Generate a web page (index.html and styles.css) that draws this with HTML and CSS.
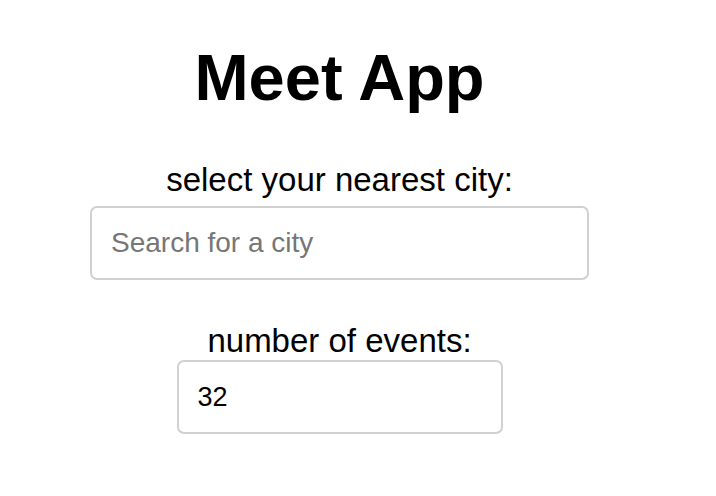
FILE: index.html
```html
<!DOCTYPE html>
<html lang="en">
<head>
<meta charset="utf-8">
<title>Meet App</title>
<link rel="stylesheet" href="styles.css">
</head>
<body>
<div class="app">
  <h1 class="title">Meet App</h1>
  <div class="field field-city">
    <label class="label" for="city">select your nearest city:</label>
    <input class="input input-city" id="city" type="text" placeholder="Search for a city">
  </div>
  <div class="field field-events">
    <label class="label" for="events">number of events:</label>
    <input class="input input-events" id="events" type="text" value="32">
  </div>
</div>
</body>
</html>
```

FILE: styles.css
```css
html, body {
  margin: 0;
  padding: 0;
  background: #ffffff;
}

body {
  font-family: "Liberation Sans", Arial, Helvetica, sans-serif;
  color: #000000;
}

.app {
  width: 679px;
  display: flex;
  flex-direction: column;
  align-items: center;
  padding-top: 41px;
}

.title {
  margin: 0;
  font-size: 65px;
  line-height: 74px;
  font-weight: 700;
}

.field {
  display: flex;
  flex-direction: column;
  align-items: center;
}

.field-city {
  margin-top: 46px;
}

.field-events {
  margin-top: 42px;
}

.label {
  font-size: 33px;
  line-height: 37px;
  margin-bottom: 8px;
}

.field-events .label {
  margin-bottom: 1px;
}

.input {
  box-sizing: border-box;
  height: 74px;
  border: 2px solid #d0d0d0;
  border-radius: 7px;
  padding: 0 19px;
  font-family: "Liberation Sans", Arial, Helvetica, sans-serif;
  font-size: 27px;
  color: #000000;
  background: #ffffff;
  outline: none;
}

.input-city {
  font-size: 28px;
}

.input::placeholder {
  color: #767676;
}

.input-city {
  width: 499px;
}

.input-events {
  width: 326px;
}
```
